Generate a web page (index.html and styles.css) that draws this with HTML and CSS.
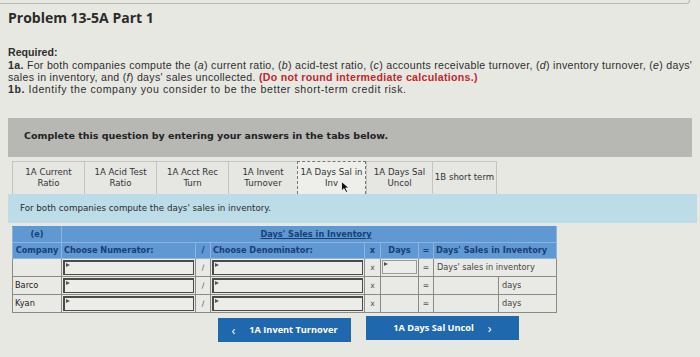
FILE: index.html
```html
<!DOCTYPE html>
<html>
<head>
<meta charset="utf-8">
<link rel="stylesheet" href="styles.css">
</head>
<body>
<div class="page">
  <div class="topline"></div>
  <h1 class="title">Problem 13-5A Part 1</h1>
  <div class="req">
    <p class="req-head">Required:</p>
    <p class="line"><b>1a.</b> For both companies compute the (<i>a</i>) current ratio, (<i>b</i>) acid-test ratio, (<i>c</i>) accounts receivable turnover, (<i>d</i>) inventory turnover, (<i>e</i>) days'</p>
    <p class="line">sales in inventory, and (<i>f</i>) days' sales uncollected. <b class="red">(Do not round intermediate calculations.)</b></p>
    <p class="line l3"><b>1b.</b> Identify the company you consider to be the better short-term credit risk.</p>
  </div>
  <div class="graybar">Complete this question by entering your answers in the tabs below.</div>
  <div class="tabs">
    <div class="tab t1">1A Current<br>Ratio</div>
    <div class="tab t2">1A Acid Test<br>Ratio</div>
    <div class="tab t3">1A Acct Rec<br>Turn</div>
    <div class="tab t4">1A Invent<br>Turnover</div>
    <div class="tab t5 active">1A Days Sal in<br>Inv<span class="cursor"><svg width="9" height="12" viewBox="0 0 9 12"><path d="M0.5 0.5 L0.5 10 L3 7.6 L5 11.5 L6.6 10.7 L4.7 7 L8 7 Z" fill="#111" stroke="#fff" stroke-width="0.8"/></svg></span></div>
    <div class="tab t6">1A Days Sal<br>Uncol</div>
    <div class="tab t7">1B short term</div>
  </div>
  <div class="blueband">For both companies compute the days' sales in inventory.</div>
  <table class="grid">
    <colgroup>
      <col class="c-co"><col class="c-num"><col class="c-op"><col class="c-den"><col class="c-x"><col class="c-days"><col class="c-op"><col class="c-r1"><col class="c-r2">
    </colgroup>
    <tr class="h1">
      <th>(e)</th>
      <th colspan="8" class="caption"><u>Days' Sales in Inventory</u></th>
    </tr>
    <tr class="h2">
      <th>Company</th>
      <th class="left">Choose Numerator:</th>
      <th>/</th>
      <th class="left">Choose Denominator:</th>
      <th>x</th>
      <th>Days</th>
      <th>=</th>
      <th colspan="2" class="left">Days' Sales in Inventory</th>
    </tr>
    <tr>
      <td></td>
      <td class="inp"><div class="box"></div></td>
      <td class="op">/</td>
      <td class="inp"><div class="box"></div></td>
      <td class="op">x</td>
      <td class="inp"><div class="box light"></div></td>
      <td class="op">=</td>
      <td colspan="2" class="txt">Days' sales in inventory</td>
    </tr>
    <tr>
      <td class="co">Barco</td>
      <td class="inp"><div class="box"></div></td>
      <td class="op">/</td>
      <td class="inp"><div class="box"></div></td>
      <td class="op">x</td>
      <td></td>
      <td class="op">=</td>
      <td></td>
      <td class="txt">days</td>
    </tr>
    <tr>
      <td class="co">Kyan</td>
      <td class="inp"><div class="box"></div></td>
      <td class="op">/</td>
      <td class="inp"><div class="box"></div></td>
      <td class="op">x</td>
      <td></td>
      <td class="op">=</td>
      <td></td>
      <td class="txt">days</td>
    </tr>
  </table>
  <div class="nav">
    <div class="btn prev"><span class="chev">&lsaquo;</span>1A Invent Turnover</div>
    <div class="btn next">1A Days Sal Uncol<span class="chev">&rsaquo;</span></div>
  </div>
</div>
</body>
</html>
```
FILE: styles.css
```css
html, body {
  margin: 0;
  padding: 0;
  background: #e8e8e3;
}
.page {
  width: 700px;
  height: 357px;
  overflow: hidden;
  position: relative;
  font-family: "Open Sans", "Liberation Sans", sans-serif;
  color: #2a2a2a;
}
.topline {
  margin: 0 10px 0 0;
  height: 3px;
  border-bottom: 1px solid #b9b9b4;
  border-right: 1px solid #b9b9b4;
  border-bottom-right-radius: 4px;
}
.title {
  margin: 6px 0 0 8px;
  font-size: 14px;
  font-weight: 700;
  color: #2b2b2b;
  line-height: 16px;
}
.req {
  margin: 20px 0 0 8px;
  font-family: "Liberation Sans", Arial, sans-serif;
  font-size: 10.6px;
  line-height: 12.2px;
  color: #2e2e2e;
}
.req p { margin: 0; white-space: nowrap; }
.req .line { letter-spacing: 0.3px; }
.req .line.l3 { letter-spacing: 0.55px; }
.req .req-head { font-weight: 700; font-size: 10.6px; line-height: 13px; }
.req b { font-weight: 700; }
.red { color: #c1272d; }
.graybar {
  margin: 22px 8px 0 8px;
  height: 39px;
  background: #b7b7b3;
  font-family: "DejaVu Sans", Verdana, sans-serif;
  font-weight: 700;
  font-size: 9.5px;
  line-height: 36px;
  padding-left: 16px;
  color: #222;
}
.tabs {
  display: flex;
  margin: 4px 0 0 12px;
  height: 33px;
  font-family: "DejaVu Sans", Verdana, sans-serif;
  font-size: 8.6px;
  line-height: 11px;
  color: #333;
}
.tab {
  box-sizing: border-box;
  border: 1px solid #c4c4c0;
  border-bottom: none;
  border-right: none;
  background: #e6e6e2;
  text-align: center;
  display: flex;
  align-items: center;
  justify-content: center;
  position: relative;
}
.t1 { width: 72px; }
.t2 { width: 72px; }
.t3 { width: 72px; }
.t4 { width: 69px; }
.t5 { width: 69px; }
.t6 { width: 66px; }
.t7 { width: 65px; border-right: 1px solid #c4c4c0; }
.tab.active {
  background: #eeeeea;
  border: 1px dashed #777;
  border-bottom: none;
}
.cursor {
  position: absolute;
  left: 43px;
  top: 19px;
  line-height: 0;
}
.blueband {
  margin: 0 3px 0 8px;
  height: 29px;
  background: #bcdde8;
  font-family: "DejaVu Sans", Verdana, sans-serif;
  font-size: 8.7px;
  line-height: 29px;
  padding-left: 12px;
  color: #2a2a2a;
}
.grid {
  margin: 3px 0 0 12px;
  border-collapse: collapse;
  table-layout: fixed;
  width: 544px;
  font-family: "DejaVu Sans", Verdana, sans-serif;
  font-size: 8.2px;
}
.c-co { width: 49px; }
.c-num { width: 134px; }
.c-op { width: 15px; }
.c-den { width: 154px; }
.c-x { width: 16px; }
.c-days { width: 38px; }
.c-r1 { width: 65px; }
.c-r2 { width: 58px; }
.grid th {
  background: #5f98d2;
  color: #183f74;
  font-weight: 700;
  height: 15px;
  padding: 0 2px;
  border: 1px solid #8db5df;
  text-align: center;
  white-space: nowrap;
}
.grid .h1 th { border-color: #5f98d2 #8db5df #8db5df #8db5df; }
.grid th.left { text-align: left; }
.grid th.caption { text-align: center; padding-left: 0; }
.grid th.caption u { position: relative; left: 8px; }
.grid td {
  border: 1px solid #8a8a86;
  height: 15px;
  padding: 0 2px;
  background: #e9e9e5;
  color: #333;
  white-space: nowrap;
}
.grid td.co { color: #222; }
.grid td.op { text-align: center; color: #555; font-size: 7.6px; }
.grid td.txt { color: #444; }
.grid td:last-child.txt { padding-left: 3px; }
.grid td.inp { padding: 1px; }
.box {
  height: 12px;
  border: 1px solid #4a4a4a;
  border-width: 2px 1px 1px 2px;
  background: #ecece8;
  position: relative;
}
.box.light { border: 1px solid #9a9a96; }
.box::before {
  content: "";
  position: absolute;
  left: 1px;
  top: 1px;
  border-left: 4px solid #555;
  border-top: 2px solid transparent;
  border-bottom: 2px solid transparent;
}
.nav {
  display: flex;
  margin: 3px 0 0 218px;
  gap: 15px;
  align-items: flex-start;
}
.btn {
  background: #1f68ad;
  color: #fff;
  font-family: "Open Sans", "Liberation Sans", sans-serif;
  font-weight: 700;
  font-size: 9.2px;
  height: 24px;
  line-height: 24px;
  display: flex;
  align-items: center;
  justify-content: center;
}
.btn.prev { width: 133px; margin-top: 2px; }
.btn.next { width: 153px; margin-top: 0; }
.chev { font-size: 13px; font-weight: 400; }
.prev .chev { margin-right: 14px; }
.next .chev { margin-left: 14px; }
```
